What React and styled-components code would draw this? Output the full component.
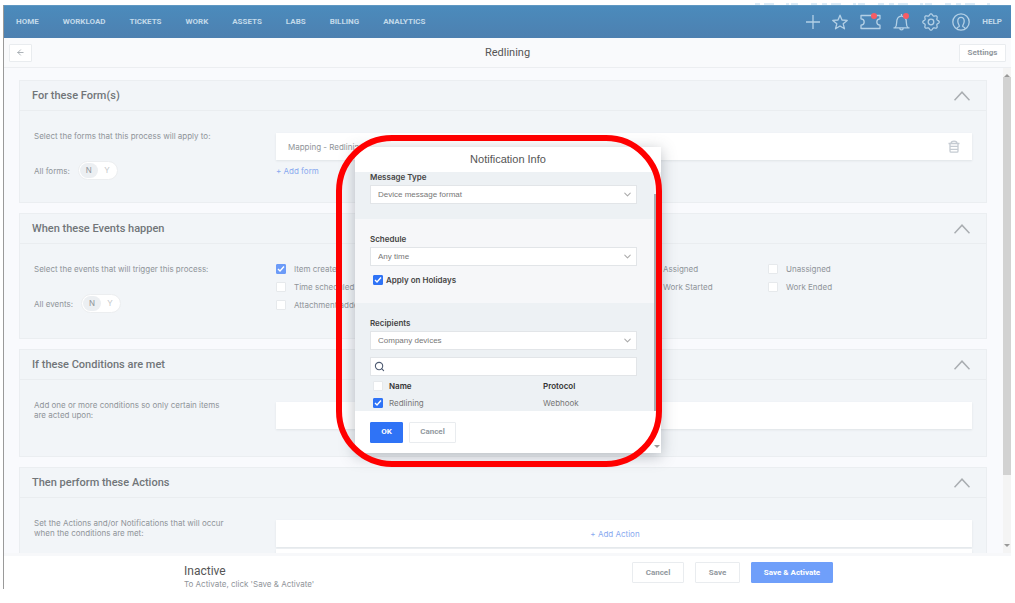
import React from "react"
import styled, { createGlobalStyle } from "styled-components"
import { ArrowLeft, ChevronDown, Search } from "lucide-react"

const GlobalStyle = createGlobalStyle`
    *{
        box-sizing:border-box;
    }
    body{
        margin:0;
        background:#fff;
        font-family:Inter, "Open Sans", sans-serif;
        font-size:8px;
        line-height:10px;
        color:#8f9499;
    }
    button, input, select{
        font:inherit;
        margin:0;
    }
    a{
        text-decoration:none;
    }
    p, h1, h2, h3{
        margin:0;
    }
    svg{
        display:block;
    }
`

const Page = styled.div`
    position:relative;
    height:100vh;
    display:flex;
    flex-direction:column;
    overflow:hidden;
    padding:0 4px 14px 3px;
`

const Above = styled.div`
    height:5px;
    flex:none;
    display:flex;
    justify-content:flex-end;
    align-items:flex-end;
    padding-right:20px;
    color:#dcebf6;
`

const Frame = styled.div`
    flex:1;
    min-height:0;
    display:flex;
    flex-direction:column;
    border-left:1px solid #9a9a9a;
`

const NavBar = styled.nav`
    height:33px;
    flex:none;
    display:flex;
    align-items:center;
    justify-content:space-between;
    padding:0 9px 0 12px;
    background:linear-gradient(#4b8bbc, #4d80b0);
    border-top:1px solid #5f98c2;
`

const NavLinks = styled.div`
    display:flex;
    align-items:center;
    gap:${props => props.$gap}px;
`

const NavLink = styled.a`
    color:#c3daea;
    font-family:Roboto, sans-serif;
    font-size:8px;
    font-weight:700;
    text-transform:uppercase;
`

const IconButton = styled.button`
    position:relative;
    padding:0;
    border:0;
    background:none;
    color:${props => props.$color || "#b3d0e6"};
`

const Dot = styled.span`
    position:absolute;
    top:0;
    right:${props => props.$right}px;
    width:6px;
    height:6px;
    border-radius:50%;
    background:#f75c64;
`

const TitleBar = styled.header`
    height:30px;
    flex:none;
    display:grid;
    grid-template-columns:1fr auto 1fr;
    align-items:center;
    padding:0 5px 0 5px;
    background:#f9fafc;
    border-bottom:1px solid #eceef1;
`

const Title = styled.h1`
    font-family:Roboto, sans-serif;
    font-size:11px;
    line-height:14px;
    font-weight:400;
    color:#555;
`

const Button = styled.button`
    height:${props => props.$height || 20}px;
    min-width:${props => props.$width}px;
    padding:0 6px;
    display:flex;
    align-items:center;
    justify-content:center;
    justify-self:${props => props.$end ? "end" : "start"};
    border:1px solid ${props => props.$fill || "#e9ecef"};
    border-radius:1px;
    background:${props => props.$fill || "#fff"};
    color:${props => props.$fill ? "#fff" : "#9299a0"};
    font-family:Roboto, sans-serif;
    font-weight:700;
`

const Body = styled.div`
    flex:1;
    min-height:0;
    display:flex;
    background:#f9fafd;
    border-bottom:3px solid #f7f8fa;
`

const Panels = styled.main`
    flex:1;
    min-width:0;
    overflow:hidden;
    padding:12px 16px 0 15px;
    display:flex;
    flex-direction:column;
    gap:10px;
`

const ScrollTrack = styled.div`
    width:8px;
    flex:none;
    display:flex;
    flex-direction:column;
    align-items:center;
    justify-content:space-between;
    padding:2px 0;
    background:#f4f4f4;
`

const Thumb = styled.div`
    width:100%;
    height:398px;
    margin-bottom:auto;
    background:#d2d2d2;
`

const Arrow = styled.i`
    height:7px;
    width:6px;
    border:3px solid transparent;
    border-${props => props.$up ? "bottom" : "top"}:3px solid #999;
    border-${props => props.$up ? "top" : "bottom"}-width:1px;
`

const PanelBox = styled.section`
    flex:none;
    height:${props => props.$height}px;
    background:#f2f5f8;
    border:1px solid #ebeef1;
`

const PanelHead = styled.div`
    height:30px;
    display:flex;
    align-items:center;
    justify-content:space-between;
    padding:0 16px 0 12px;
    border-bottom:1px solid #eaedf0;
`

const PanelTitle = styled.h2`
    font-family:Roboto, sans-serif;
    font-size:11px;
    line-height:16px;
    font-weight:500;
    color:#717579;
`

const PanelBody = styled.div`
    display:grid;
    grid-template-columns:242px 1fr;
    padding:20px 14px 0 14px;
`

const Side = styled.div`
    display:flex;
    flex-direction:column;
    gap:20px;
    max-width:196px;
`

const SwitchRow = styled.div`
    display:flex;
    align-items:center;
    gap:8px;
`

const Switch = styled.button`
    display:flex;
    padding:1px;
    border:1px solid #eceef0;
    border-radius:10px;
    background:#fff;
`

const Choice = styled.span`
    width:18px;
    height:15px;
    line-height:15px;
    border-radius:8px;
    background:${props => props.$on ? "#eceff2" : "none"};
    color:${props => props.$on ? "#8f9499" : "#c3c6c9"};
`

const Card = styled.div`
    height:27px;
    margin-top:2px;
    display:flex;
    align-items:center;
    justify-content:${props => props.$center ? "center" : "space-between"};
    padding:0 ${props => props.$center ? 30 : 12}px 0 12px;
    background:#fff;
    box-shadow:0 1px 2px #dfe3e7;
`

const BlueLink = styled.a`
    color:#88a9ef;
`

const FormLink = styled(BlueLink)`
    display:block;
    margin-top:6px;
`

const Checks = styled.div`
    display:grid;
    grid-template-columns:repeat(5, 123px);
    align-content:start;
    row-gap:8px;
`

const Check = styled.label`
    grid-column:${props => props.$col || "auto"};
    display:flex;
    align-items:center;
    gap:8px;
    white-space:nowrap;
`

const HolidayCheck = styled(Check)`
    gap:3px;
    margin-top:9px;
    padding-left:3px;
    font-weight:600;
    color:#444;
`

const Box = styled.input`
    appearance:none;
    width:10px;
    height:10px;
    border:1px solid #e6e9ec;
    border-radius:1px;
    background:#fff;
    &:checked{
        border-color:${props => props.$strong ? "#2f73f6" : "#6c9bf8"};
        background:${props => props.$strong ? "#2f73f6" : "#6c9bf8"} url("data:image/svg+xml,%3Csvg xmlns='http://www.w3.org/2000/svg' viewBox='0 0 8 8' fill='none' stroke='white' stroke-width='1.4'%3E%3Cpath d='M1 4l2 2 4-4.5'/%3E%3C/svg%3E");
    }
`

const Footer = styled.footer`
    height:33px;
    flex:none;
    display:flex;
    align-items:center;
    padding:0 178px 0 180px;
    background:#fff;
`

const Status = styled.div`
    flex:1;
    padding-top:7px;
`

const StatusName = styled.h3`
    font-family:Roboto, sans-serif;
    font-size:12px;
    line-height:16px;
    font-weight:400;
    color:#555;
`

const Actions = styled.div`
    display:flex;
    gap:11px;
`

const Overlay = styled.div`
    position:absolute;
    top:135px;
    left:336px;
    width:326px;
    height:332px;
    border:6px solid #ff0000;
    border-radius:56px;
    pointer-events:none;
    z-index:2;
`

const Modal = styled.div`
    position:absolute;
    top:147px;
    left:355px;
    width:306px;
    display:flex;
    flex-direction:column;
    background:#fff;
    box-shadow:0 3px 14px rgba(60, 70, 80, 0.35);
    color:#777;
    z-index:1;
`

const ModalTitle = styled.h2`
    height:25px;
    line-height:25px;
    text-align:center;
    font-family:"Liberation Sans", Arial, sans-serif;
    font-size:11px;
    font-weight:400;
    color:#555;
`

const ModalScroll = styled.div`
    height:239px;
    display:flex;
    overflow:hidden;
`

const ModalParts = styled.div`
    flex:1;
`

const ModalTrack = styled.div`
    width:7px;
    padding-top:22px;
    background:#f4f5f6;
`

const ModalThumb = styled.div`
    height:100%;
    background:#a9adb1;
`

const ModalPart = styled.div`
    height:${props => props.$height}px;
    padding:${props => props.$top}px 17px 0 15px;
    background:${props => props.$light ? "#f6f7f9" : "#edf1f4"};
`

const FieldLabel = styled.label`
    display:block;
    margin-bottom:3px;
    font-weight:600;
    color:#444;
`

const SelectWrap = styled.div`
    display:grid;
    grid-template-columns:1fr 18px;
    align-items:center;
    height:19px;
    background:#fff;
    border:1px solid #e2e5e8;
    color:#aaa;
`

const Select = styled.select`
    appearance:none;
    grid-area:1 / 1 / 2 / 3;
    height:17px;
    padding:0 7px;
    border:0;
    background:none;
    font-family:"Liberation Sans", Arial, sans-serif;
    color:#777;
`

const Chevron = styled(ChevronDown)`
    grid-area:1 / 2;
    justify-self:center;
    pointer-events:none;
`

const SearchWrap = styled.div`
    display:flex;
    align-items:center;
    height:19px;
    margin:7px 0 1px;
    padding:0 3px;
    background:#fff;
    border:1px solid #e2e5e8;
    color:#4f5c73;
`

const SearchInput = styled.input`
    flex:1;
    border:0;
    outline:0;
    background:none;
`

const Table = styled.table`
    width:100%;
    border-collapse:collapse;
    text-align:left;
    th, td{
        height:17px;
        padding:0;
    }
    th{
        font-weight:600;
        color:#333;
    }
    th:first-child, td:first-child{
        width:19px;
        padding-left:3px;
    }
    th:nth-child(2){
        width:154px;
    }
    input{
        display:block;
    }
`

const ModalFoot = styled.div`
    position:relative;
    height:42px;
    display:flex;
    align-items:center;
    gap:6px;
    padding-left:15px;
`

const ModalArrow = styled(Arrow)`
    position:absolute;
    right:1px;
    bottom:1px;
`

function Panel({ title, height, children }) {
    return (
        <PanelBox $height={height}>
            <PanelHead>
                <PanelTitle>{title}</PanelTitle>
                <IconButton $color="#a9adb1" aria-label="Collapse">
                    <svg width="16" height="10" viewBox="0 0 16 10" fill="none" stroke="currentColor" strokeWidth="1.5"><path d="M0.500 9.200L8 1.200l7.500 8" /></svg>
                </IconButton>
            </PanelHead>
            <PanelBody>{children}</PanelBody>
        </PanelBox>
    )
}

function YesNo({ label }) {
    return (
        <SwitchRow>
            <span>{label}</span>
            <Switch aria-label={label}>
                <Choice $on>N</Choice>
                <Choice>Y</Choice>
            </Switch>
        </SwitchRow>
    )
}

function Dropdown({ id, label, value }) {
    return (
        <>
            <FieldLabel htmlFor={id}>{label}</FieldLabel>
            <SelectWrap>
                <Select id={id}><option>{value}</option></Select>
                <Chevron size={11} strokeWidth={2.2} />
            </SelectWrap>
        </>
    )
}

function Icon({ width = 18, children }) {
    return (
        <svg width={width} height="18" viewBox={`0 0 ${width} 18`} fill="none" stroke="currentColor" strokeWidth="1.3" strokeLinejoin="round">
            {children}
        </svg>
    )
}

// wavy ring with eight bumps
const gearPoints = Array.from({ length: 96 }, (_, i) => {
    const a = i / 96 * Math.PI * 2
    const r = 7.3 + 0.9 * Math.cos(8 * a)
    return `${(9 + r * Math.cos(a)).toFixed(2)},${(9 + r * Math.sin(a)).toFixed(2)}`
}).join(" ")

const links = ["Home", "Workload", "Tickets", "Work", "Assets", "Labs", "Billing", "Analytics"]
const events = [
    { name: "Item created", col: 1, on: true },
    { name: "Assigned", col: 4 },
    { name: "Unassigned", col: 5 },
    { name: "Time scheduled", col: 1 },
    { name: "Work Started", col: 4 },
    { name: "Work Ended", col: 5 },
    { name: "Attachment added", col: 1 },
]

export default function App() {
    return (
        <Page>
            <GlobalStyle />
            <Above>
                <svg width="236" height="2" viewBox="0 0 236 2" stroke="currentColor" strokeWidth="2"><path d="M0 1h236" strokeDasharray="5 4 10 12 3 2 7 13 6 5" /></svg>
            </Above>
            <Frame>
                <NavBar>
                    <NavLinks $gap={24}>
                        {links.map(l => <NavLink href="#" key={l}>{l}</NavLink>)}
                    </NavLinks>
                    <NavLinks $gap={12}>
                        <IconButton aria-label="Add"><Icon width={14}><path d="M7 2v14M0 9h14" /></Icon></IconButton>
                        <IconButton aria-label="Favorites"><Icon width={16}><path d="M8 2.200l2 4.800 5.200.4-4 3.400 1.300 5L8 13l-4.500 2.800 1.300-5-4-3.400L6 7z" /></Icon></IconButton>
                        <IconButton aria-label="Tickets">
                            <Icon width={21}><path d="M1.500 2.500h18.500v3.300c-2.800.2-3.200 1.500-3.200 3.200s.4 3 3.200 3.200v3.300H1v-3.300c2.800-.2 3.200-1.500 3.200-3.200S3.800 6 1 5.800V2.500z" /></Icon>
                            <Dot $right={4} />
                        </IconButton>
                        <IconButton aria-label="Alerts">
                            <Icon width={17}><path d="M.5 14.800h16M2 14.600c1.300-1 1.600-2 1.600-4.600 0-4 1.400-6.800 4.900-6.800s4.900 2.800 4.900 6.800c0 2.600.3 3.600 1.600 4.600M8.500 1v2M6.800 15.200c0 2.200 3.400 2.200 3.400 0" /></Icon>
                            <Dot $right={1} />
                        </IconButton>
                        <IconButton aria-label="Preferences">
                            <Icon>
                                <polygon points={gearPoints} />
                                <circle cx="9" cy="9" r="2.800" />
                            </Icon>
                        </IconButton>
                        <IconButton aria-label="Account">
                            <Icon>
                                <circle cx="9" cy="9" r="8.200" />
                                <path d="M5 15.800c0-1.600 2-1.700 2.300-2.600.2-1-1.500-2.200-1.500-5C5.800 5.700 7 4.300 9 4.300s3.200 1.400 3.200 3.900c0 2.800-1.700 4-1.500 5 .3.900 2.300 1 2.300 2.600" />
                            </Icon>
                        </IconButton>
                        <NavLink href="#">Help</NavLink>
                    </NavLinks>
                </NavBar>
                <TitleBar>
                    <Button $width={22} $height={18} aria-label="Back"><ArrowLeft size={9} /></Button>
                    <Title>Redlining</Title>
                    <Button $width={47} $height={18} $end>Settings</Button>
                </TitleBar>
                <Body>
                    <Panels>
                        <Panel title="For these Form(s)" height={123}>
                            <Side>
                                <p>Select the forms that this process will apply to:</p>
                                <YesNo label="All forms:" />
                            </Side>
                            <div>
                                <Card>
                                    <span>Mapping - Redlining</span>
                                    <IconButton $color="#c5cbd2" aria-label="Delete form">
                                        <svg width="12" height="13" viewBox="0 0 12 13" fill="none" stroke="currentColor" strokeWidth="1.3"><path d="M0.500 3.500h11M3 3.200C3 0.300 9 0.300 9 3.200M2 3.500V11c0 .8.3 1.200 1 1.200h6c.7 0 1-.4 1-1.200V3.500M2 6.300h8M2 9.300h8" /></svg>
                                    </IconButton>
                                </Card>
                                <FormLink href="#">+ Add form</FormLink>
                            </div>
                        </Panel>
                        <Panel title="When these Events happen" height={126}>
                            <Side>
                                <p>Select the events that will trigger this process:</p>
                                <YesNo label="All events:" />
                            </Side>
                            <Checks>
                                {events.map(e => <Check key={e.name} $col={e.col}><Box type="checkbox" defaultChecked={e.on} />{e.name}</Check>)}
                            </Checks>
                        </Panel>
                        <Panel title="If these Conditions are met" height={108}>
                            <Side><p>Add one or more conditions so only certain items are acted upon:</p></Side>
                            <Card />
                        </Panel>
                        <Panel title="Then perform these Actions" height={150}>
                            <Side><p>Set the Actions and/or Notifications that will occur when the conditions are met:</p></Side>
                            <div>
                                <Card $center><BlueLink href="#">+ Add Action</BlueLink></Card>
                                <Card />
                            </div>
                        </Panel>
                    </Panels>
                    <ScrollTrack>
                        <Arrow $up />
                        <Thumb />
                        <Arrow />
                    </ScrollTrack>
                </Body>
                <Footer>
                    <Status>
                        <StatusName>Inactive</StatusName>
                        <p>To Activate, click 'Save &amp; Activate'</p>
                    </Status>
                    <Actions>
                        <Button $width={52} $height={21}>Cancel</Button>
                        <Button $width={45} $height={21}>Save</Button>
                        <Button $width={82} $height={21} $fill="#6f9ffa">Save &amp; Activate</Button>
                    </Actions>
                </Footer>
            </Frame>
            <Modal role="dialog">
                <ModalTitle>Notification Info</ModalTitle>
                <ModalScroll>
                    <ModalParts>
                        <ModalPart $height={47} $top={0}>
                            <Dropdown id="type" label="Message Type" value="Device message format" />
                        </ModalPart>
                        <ModalPart $height={84} $top={15} $light>
                            <Dropdown id="schedule" label="Schedule" value="Any time" />
                            <HolidayCheck><Box type="checkbox" defaultChecked $strong />Apply on Holidays</HolidayCheck>
                        </ModalPart>
                        <ModalPart $height={120} $top={15}>
                            <Dropdown id="recipients" label="Recipients" value="Company devices" />
                            <SearchWrap><Search size={11} strokeWidth={2.4} /><SearchInput aria-label="Search" /></SearchWrap>
                            <Table>
                                <thead><tr><th><Box type="checkbox" aria-label="Select all" /></th><th>Name</th><th>Protocol</th></tr></thead>
                                <tbody><tr><td><Box type="checkbox" defaultChecked $strong aria-label="Select Redlining" /></td><td>Redlining</td><td>Webhook</td></tr></tbody>
                            </Table>
                        </ModalPart>
                    </ModalParts>
                    <ModalTrack><ModalThumb /></ModalTrack>
                </ModalScroll>
                <ModalFoot>
                    <Button $width={33} $height={21} $fill="#2f73f6">OK</Button>
                    <Button $width={47} $height={21}>Cancel</Button>
                    <ModalArrow />
                </ModalFoot>
            </Modal>
            <Overlay />
        </Page>
    )
}
